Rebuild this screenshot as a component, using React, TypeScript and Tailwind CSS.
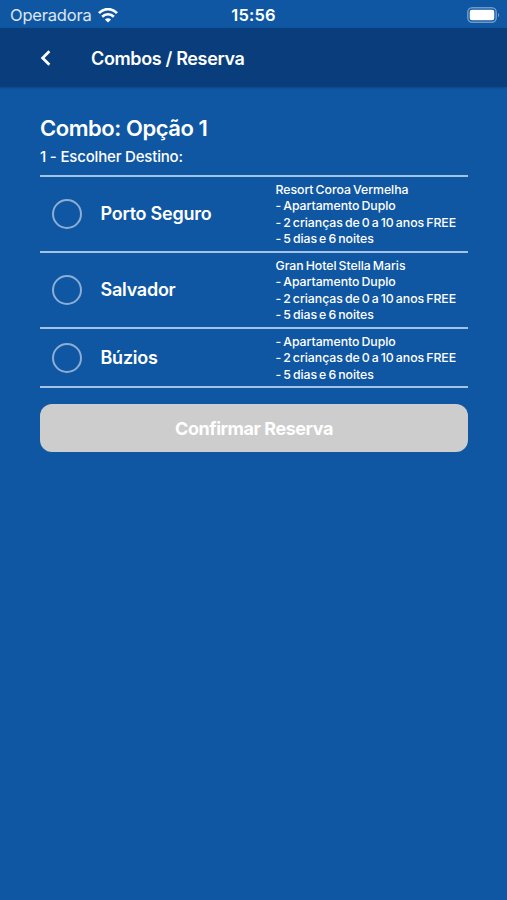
import React, { useState } from 'react';
import { clsx } from 'clsx';

interface Destination {
  name: string;
  details: string[];
}

const destinations: Destination[] = [
  {
    name: 'Porto Seguro',
    details: [
      'Resort Coroa Vermelha',
      '- Apartamento Duplo',
      '- 2 crianças de 0 a 10 anos FREE',
      '- 5 dias e 6 noites',
    ],
  },
  {
    name: 'Salvador',
    details: [
      'Gran Hotel Stella Maris',
      '- Apartamento Duplo',
      '- 2 crianças de 0 a 10 anos FREE',
      '- 5 dias e 6 noites',
    ],
  },
  {
    name: 'Búzios',
    details: [
      '- Apartamento Duplo',
      '- 2 crianças de 0 a 10 anos FREE',
      '- 5 dias e 6 noites',
    ],
  },
];

function WifiIcon() {
  return (
    <svg width="20" height="15" viewBox="0 0 20 15" fill="none" stroke="white" strokeWidth="2.7">
      <path d="M1 5.2C6-0.2 14-0.2 19 5.2" />
      <path d="M4.2 8.8C7.4 5.4 12.6 5.4 15.8 8.8" />
      <path d="M10 14.6L6.9 11.5C8.7 9.8 11.3 9.8 13.1 11.5Z" fill="white" stroke="none" />
    </svg>
  );
}

function BatteryIcon() {
  return (
    <svg width="34" height="16" viewBox="0 0 34 16" fill="none">
      <rect x="0.8" y="0.8" width="28.4" height="14.4" rx="4.4" stroke="white" strokeOpacity="0.4" strokeWidth="1.5" />
      <rect x="2.7" y="2.8" width="24.6" height="10.4" rx="2.2" fill="white" />
      <path d="M31 5.8C32.6 6.6 32.6 9.4 31 10.2Z" fill="white" fillOpacity="0.4" />
    </svg>
  );
}

function StatusBar() {
  return (
    <div className="grid h-7 grid-cols-3 items-center pt-0.5 pl-2.5 pr-1.5 font-['Inter',sans-serif] text-white">
      <div className="flex items-center gap-1.5">
        <span className="text-[16.5px] leading-5 tracking-[-0.2px] text-white/85">Operadora</span>
        <WifiIcon />
      </div>
      <span className="-ml-1 text-center text-[16.5px] font-semibold leading-5 tracking-[0.2px]">15:56</span>
      <div className="flex justify-end">
        <BatteryIcon />
      </div>
    </div>
  );
}

function Header() {
  return (
    <header className="flex h-[59px] items-center bg-[#093d7b] pl-10 shadow-[0_1px_2px_rgba(0,0,0,0.2)]">
      <button type="button" aria-label="Voltar" className="w-[51px]">
        <svg width="12" height="16" viewBox="0 0 12 16" fill="none" stroke="white" strokeWidth="2.7">
          <path d="M9.4 1.3L2.6 8L9.4 14.7" />
        </svg>
      </button>
      <h1 className="pt-px text-[18px] font-semibold tracking-[-0.36px]">Combos / Reserva</h1>
    </header>
  );
}

interface DestinationRowProps {
  destination: Destination;
  selected: boolean;
  onSelect: () => void;
}

function DestinationRow({ destination, selected, onSelect }: DestinationRowProps) {
  return (
    <li className="border-b-2 border-[#a3c3e6]">
      <button type="button" onClick={onSelect} className="flex w-full items-center py-1 pl-3 text-left">
        <span
          className={clsx(
            'size-[30px] shrink-0 rounded-full border-2 border-[#8caed6]',
            selected && 'bg-white'
          )}
        />
        <span className="w-[175px] shrink-0 pl-[18.5px] text-[18px] font-semibold tracking-[-0.25px]">
          {destination.name}
        </span>
        <span className="pl-[18.5px] pt-px text-[12.3px] font-medium leading-[16.5px] tracking-[-0.04px] -mb-px [word-spacing:-1.15px]">
          {destination.details.map((line) => (
            <span key={line} className="block whitespace-nowrap">{line}</span>
          ))}
        </span>
      </button>
    </li>
  );
}

export default function App() {
  const [selected, setSelected] = useState<string | null>(null);

  return (
    <div className="min-h-screen bg-[#0f57a2] font-['Inter',sans-serif] text-white">
      <StatusBar />
      <Header />
      <main className="pl-10 pr-[39px] pt-[27px]">
        <h2 className="text-[22px] font-semibold leading-7 tracking-[-0.45px]">Combo: Opção 1</h2>
        <p className="mt-[5px] text-[15px] font-medium leading-5 tracking-[-0.18px]">1 - Escolher Destino:</p>
        <ul className="mt-[7.75px] border-t-2 border-[#a3c3e6]">
          {destinations.map((destination) => (
            <DestinationRow
              key={destination.name}
              destination={destination}
              selected={selected === destination.name}
              onSelect={() => setSelected(destination.name)}
            />
          ))}
        </ul>
        <button
          type="button"
          disabled={!selected}
          className="mt-[15.75px] h-12 w-full rounded-xl bg-[#cdcdcd] text-[18px] font-bold tracking-[-0.45px]"
        >
          Confirmar Reserva
        </button>
      </main>
    </div>
  );
}
